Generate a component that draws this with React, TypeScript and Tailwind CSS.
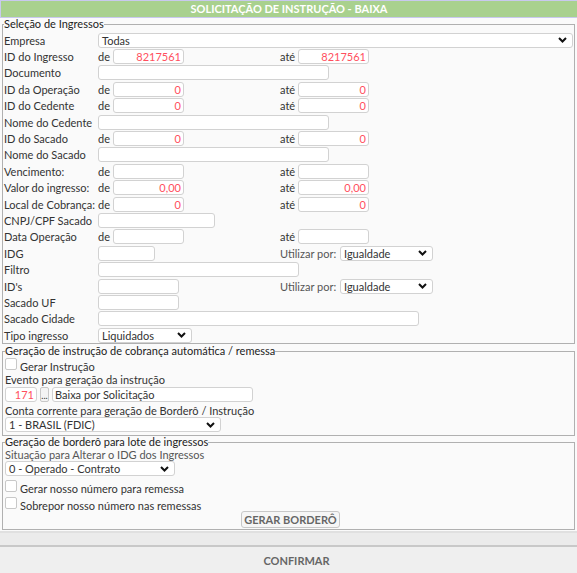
import React from 'react';

const Chevron = () => (
  <svg width="9" height="6" viewBox="0 0 9 6" className="shrink-0">
    <path d="M1 1 L4.5 4.5 L8 1" fill="none" stroke="#111" strokeWidth="2" />
  </svg>
);

function Field({ w, value = '', align = 'right' }: { w: string; value?: string; align?: 'left' | 'right' }) {
  return (
    <div
      className={`${w} h-[15px] shrink-0 bg-white border border-[#d2d2d2] rounded-[3px] px-[2px] leading-[13px] ${
        align === 'right' ? 'text-right text-[#ff4f5e]' : 'text-left text-[#333]'
      }`}
    >
      {value}
    </div>
  );
}

function Select({ w, value }: { w: string; value: string }) {
  return (
    <div className={`${w} h-[15px] shrink-0 bg-white border border-[#d2d2d2] rounded-[3px] pl-[3px] pr-[5px] flex items-center justify-between text-[#333]`}>
      <span className="leading-[13px]">{value}</span>
      <Chevron />
    </div>
  );
}

function Row({ label, children }: { label: string; children?: React.ReactNode }) {
  return (
    <div className="h-[16.4px] flex items-center">
      <div className="w-[94px] shrink-0 whitespace-nowrap overflow-visible">{label}</div>
      {children}
    </div>
  );
}

function Range({ label, a = '', b = '', noAte }: { label: string; a?: string; b?: string; noAte?: boolean }) {
  return (
    <Row label={label}>
      <div className="w-[182px] shrink-0 flex items-center">
        <span className="w-[15px]">de</span>
        <Field w="w-[71px]" value={a} />
      </div>
      {!noAte && (
        <>
          <span className="w-[18px] text-left">até</span>
          <Field w="w-[71px]" value={b} />
        </>
      )}
    </Row>
  );
}

function Check({ label }: { label: string }) {
  return (
    <div className="flex items-start h-[17px]">
      <div className="w-[12px] h-[12px] mt-[1px] bg-white border border-[#c8c8c8] rounded-[2px] shrink-0" />
      <span className="ml-[3px] mt-[2px] leading-[16px]">{label}</span>
    </div>
  );
}

export default function App() {
  return (
    <div className="w-[577px] h-[573px] bg-[#fafafa] font-['Lato','Liberation_Sans',sans-serif] text-[11px] leading-[13px] text-[#333] flex flex-col overflow-hidden">
      <div className="h-[18px] shrink-0 bg-[#a9d18e] border-t border-l border-b border-[#c9c9ee] text-white font-bold text-center leading-[16px]">
        SOLICITAÇÃO DE INSTRUÇÃO - BAIXA
      </div>

      <fieldset className="mx-[2px] border border-[#b0b0b0] px-[1px]">
        <legend className="px-0 leading-[12px] text-[#222]">Seleção de Ingressos</legend>
        <div className="flex flex-col mt-[2px]">
          <Row label="Empresa">
            <Select w="w-[475px]" value="Todas" />
          </Row>
          <Range label="ID do Ingresso" a="8217561" b="8217561" />
          <Row label="Documento"><Field w="w-[231px]" /></Row>
          <Range label="ID da Operação" a="0" b="0" />
          <Range label="ID do Cedente" a="0" b="0" />
          <Row label="Nome do Cedente"><Field w="w-[231px]" /></Row>
          <Range label="ID do Sacado" a="0" b="0" />
          <Row label="Nome do Sacado"><Field w="w-[231px]" /></Row>
          <Range label="Vencimento:" />
          <Range label="Valor do ingresso:" a="0,00" b="0,00" />
          <Range label="Local de Cobrança:" a="0" b="0" />
          <Row label="CNPJ/CPF Sacado"><Field w="w-[117px]" /></Row>
          <Range label="Data Operação" />
          <Row label="IDG">
            <div className="w-[182px] shrink-0"><Field w="w-[57px]" /></div>
            <span className="w-[60px] text-[#555]">Utilizar por:</span>
            <Select w="w-[93px]" value="Igualdade" />
          </Row>
          <Row label="Filtro"><Field w="w-[201px]" /></Row>
          <Row label="ID's">
            <div className="w-[182px] shrink-0"><Field w="w-[81px]" /></div>
            <span className="w-[60px] text-[#555]">Utilizar por:</span>
            <Select w="w-[93px]" value="Igualdade" />
          </Row>
          <Row label="Sacado UF"><Field w="w-[81px]" /></Row>
          <Row label="Sacado Cidade"><Field w="w-[321px]" /></Row>
          <Row label="Tipo ingresso"><Select w="w-[94px]" value="Liquidados" /></Row>
        </div>
      </fieldset>

      <fieldset className="mx-[2px] mt-[1px] border border-[#b0b0b0] px-[2px] pb-[3px]">
        <legend className="px-0 leading-[12px] text-[#222]">Geração de instrução de cobrança automática / remessa</legend>
        <Check label="Gerar Instrução" />
        <div className="h-[13px] leading-[13px] mt-[-1px]">Evento para geração da instrução</div>
        <div className="flex items-center gap-[3px] mt-[1px]">
          <Field w="w-[32px]" value="171" />
          <div className="w-[9px] h-[15px] bg-[#f4f4f4] border border-[#c8c8c8] rounded-[2px] text-[9px] leading-[16px] text-center">...</div>
          <Field w="w-[201px]" value="Baixa por Solicitação" align="left" />
        </div>
        <div className="h-[14px] leading-[15px] mt-[1px]">Conta corrente para geração de Borderô / Instrução</div>
        <Select w="w-[216px]" value="1 - BRASIL (FDIC)" />
      </fieldset>

      <fieldset className="mx-[2px] border border-[#b0b0b0] px-[2px]">
        <legend className="px-0 leading-[12px] text-[#222]">Geração de borderô para lote de ingressos</legend>
        <div className="h-[13px] leading-[13px] text-[#555]">Situação para Alterar o IDG dos Ingressos</div>
        <Select w="w-[170px]" value="0 - Operado - Contrato" />
        <div className="mt-[3px]">
          <Check label="Gerar nosso número para remessa" />
          <Check label="Sobrepor nosso número nas remessas" />
        </div>
        <div className="flex justify-center pl-[4px] mt-[-2px] pb-[1px]">
          <div className="h-[17px] px-[2px] bg-[#f6f6f6] border border-[#c8c8c8] rounded-[3px] text-[#666] font-bold leading-[15px]">
            GERAR BORDERÔ
          </div>
        </div>
      </fieldset>

      <div className="mt-[1px] h-[14px] shrink-0 bg-[#ebebeb] border-t-2 border-[#e0e0e0]" />
      <div className="flex-1 bg-[#efefef] border-t-2 border-[#c8c8c8] flex items-center justify-center pl-[16px] pt-[1px]">
        <span className="text-[#666] font-bold">CONFIRMAR</span>
      </div>
    </div>
  );
}
